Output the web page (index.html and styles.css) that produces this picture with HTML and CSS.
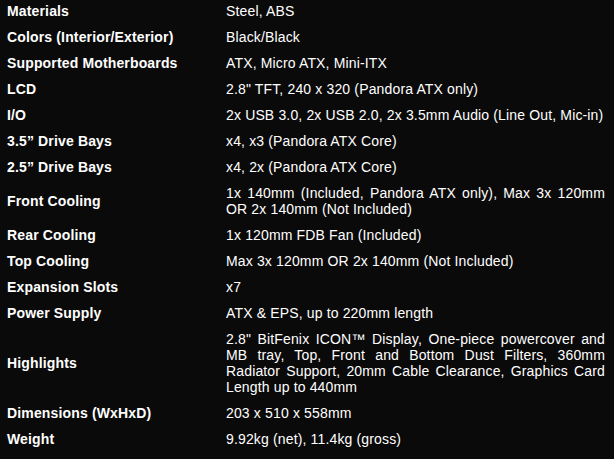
FILE: index.html
```html
<!DOCTYPE html>
<html>
<head>
<meta charset="utf-8">
<link rel="stylesheet" href="styles.css">
</head>
<body>
<table class="specs">
<tr><th>Materials</th><td>Steel, ABS</td></tr>
<tr><th>Colors (Interior/Exterior)</th><td>Black/Black</td></tr>
<tr><th>Supported Motherboards</th><td>ATX, Micro ATX, Mini-ITX</td></tr>
<tr><th>LCD</th><td>2.8" TFT, 240 x 320 (Pandora ATX only)</td></tr>
<tr><th>I/O</th><td>2x USB 3.0, 2x USB 2.0, 2x 3.5mm Audio (Line Out, Mic-in)</td></tr>
<tr><th>3.5” Drive Bays</th><td>x4, x3 (Pandora ATX Core)</td></tr>
<tr><th>2.5” Drive Bays</th><td>x4, 2x (Pandora ATX Core)</td></tr>
<tr><th>Front Cooling</th><td>1x 140mm (Included, Pandora ATX only), Max 3x 120mm OR 2x 140mm (Not Included)</td></tr>
<tr><th>Rear Cooling</th><td>1x 120mm FDB Fan (Included)</td></tr>
<tr><th>Top Cooling</th><td>Max 3x 120mm OR 2x 140mm (Not Included)</td></tr>
<tr><th>Expansion Slots</th><td>x7</td></tr>
<tr><th>Power Supply</th><td>ATX &amp; EPS, up to 220mm length</td></tr>
<tr><th>Highlights</th><td>2.8" BitFenix ICON™ Display, One-piece powercover and MB tray, Top, Front and Bottom Dust Filters, 360mm Radiator Support, 20mm Cable Clearance, Graphics Card Length up to 440mm</td></tr>
<tr><th>Dimensions (WxHxD)</th><td>203 x 510 x 558mm</td></tr>
<tr><th>Weight</th><td>9.92kg (net), 11.4kg (gross)</td></tr>
</table>
</body>
</html>
```
FILE: styles.css
```css
html, body {
  margin: 0;
  padding: 0;
  background: #0b0a0a;
}
body {
  font-family: "Liberation Sans", Arial, sans-serif;
  font-size: 14px;
  letter-spacing: 0.15px;
  color: #ffffff;
  overflow: hidden;
}
.specs {
  border-collapse: collapse;
  margin-top: -2px;
  width: 614px;
}
.specs th, .specs td {
  padding: 5px 0;
  line-height: 16px;
  vertical-align: middle;
}
.specs th {
  font-weight: bold;
  text-align: left;
  padding-left: 7px;
  width: 219px;
}
.specs td {
  text-align: justify;
  padding-right: 9px;
}
```
